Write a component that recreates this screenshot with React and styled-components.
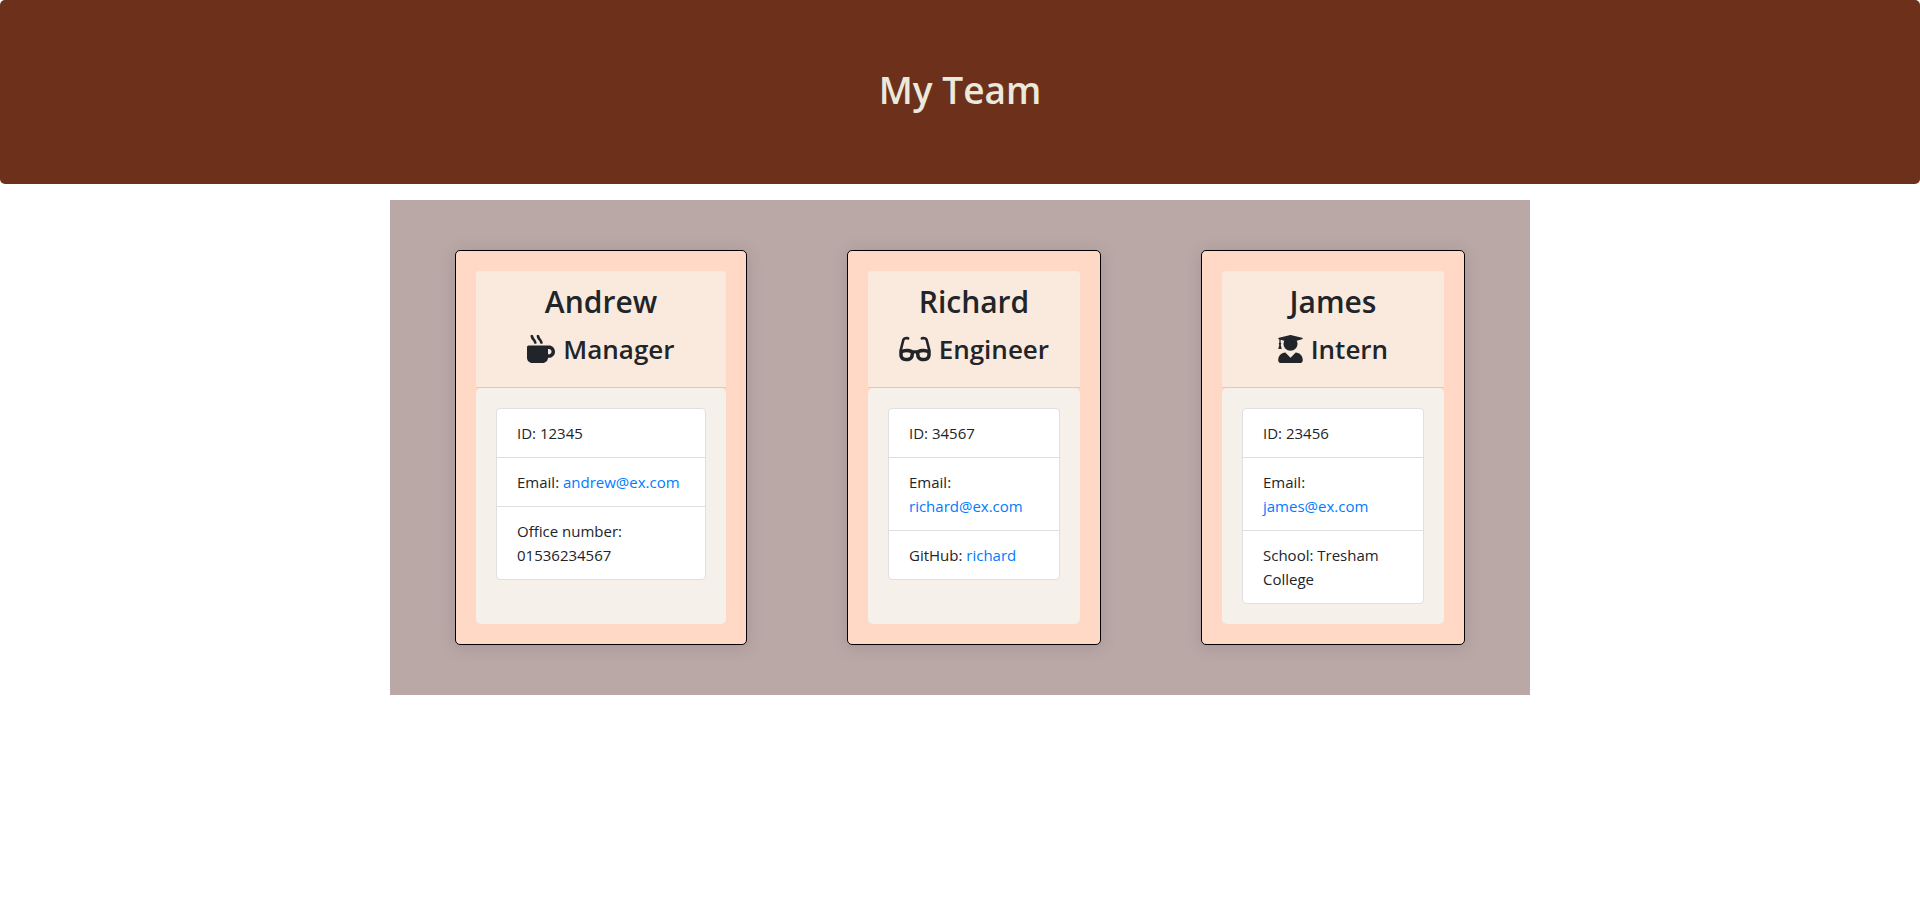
import React from "react";
import styled, { createGlobalStyle } from "styled-components";
import { FaMugHot, FaGlasses, FaUserGraduate } from "react-icons/fa";

const GlobalStyle = createGlobalStyle`
  *, *::before, *::after { box-sizing: border-box; }
  body {
    margin: 0;
    background: #ffffff;
    color: #212529;
    font-family: "Segoe UI", "Open Sans", "Noto Sans", sans-serif;
    font-size: 15px;
    line-height: 24px;
  }
`;

const Hero = styled.header`
  padding: 64px 32px;
  margin-bottom: 16px;
  border-radius: 5px;
  background: #6d301b;
  color: #ebe9dc;
  text-align: center;
`;

const Title = styled.h1`
  margin: 0 0 4px;
  font-size: 37px;
  font-weight: 600;
  line-height: 52px;
`;

const Team = styled.main`
  display: flex;
  flex-wrap: wrap;
  gap: 100px;
  max-width: 1140px;
  margin: 0 auto;
  padding: 50px 65px;
  background: #b9a8a5;
`;

const Card = styled.article`
  display: flex;
  flex-direction: column;
  flex: ${(p) => p.$share} 1 0;
  min-width: 240px;
  padding: 20px;
  border: 1px solid #000000;
  border-radius: 5px;
  background: #ffd8c6;
  box-shadow: 0 2px 16px rgba(100, 70, 110, 0.2);
`;

const CardHeader = styled.div`
  padding: 12px 20px;
  border-bottom: 1px solid rgba(0, 0, 0, 0.125);
  border-radius: 4px 4px 0 0;
  background: #faeadd;
  text-align: center;
`;

const Name = styled.h2`
  margin: 0 0 8px;
  font-size: 30px;
  font-weight: 600;
  line-height: 38px;
`;

const Role = styled.h3`
  margin: 0 0 6px;
  font-size: 26px;
  font-weight: 600;
  line-height: 40px;
  white-space: nowrap;

  svg {
    width: ${(p) => p.$iconWidth}px;
    height: 28px;
    margin-right: 1px;
    vertical-align: -4px;
  }
`;

const CardBody = styled.div`
  flex: 1;
  padding: 20px;
  border-radius: 5px;
  background: #f5f0e9;
`;

const Details = styled.ul`
  margin: 0;
  padding: 0;
  list-style: none;
  border: 1px solid #dfdfdf;
  border-radius: 4px;
  background: #ffffff;
`;

const Detail = styled.li`
  padding: 12px 20px;

  & + & {
    border-top: 1px solid #dfdfdf;
  }
`;

const Link = styled.a`
  color: #007bff;
  text-decoration: none;

  &:hover {
    text-decoration: underline;
  }
`;

const members = [
  {
    name: "Andrew", role: "Manager", Icon: FaMugHot, iconWidth: 28, share: 250,
    id: "12345", email: "andrew@ex.com", extra: "Office number: 01536234567",
  },
  {
    name: "Richard", role: "Engineer", Icon: FaGlasses, iconWidth: 32, share: 212,
    id: "34567", email: "richard@ex.com",
    extra: <>GitHub: <Link href="https://github.com/richard">richard</Link></>,
  },
  {
    name: "James", role: "Intern", Icon: FaUserGraduate, iconWidth: 25, share: 222,
    id: "23456", email: "james@ex.com", extra: "School: Tresham College",
  },
];

export default function App() {
  return (
    <>
      <GlobalStyle />
      <Hero>
        <Title>My Team</Title>
      </Hero>
      <Team>
        {members.map(({ name, role, Icon, iconWidth, share, id, email, extra }) => (
          <Card key={id} $share={share}>
            <CardHeader>
              <Name>{name}</Name>
              <Role $iconWidth={iconWidth}><Icon aria-hidden="true" /> {role}</Role>
            </CardHeader>
            <CardBody>
              <Details>
                <Detail>ID: {id}</Detail>
                <Detail>Email: <Link href={`mailto:${email}`}>{email}</Link></Detail>
                <Detail>{extra}</Detail>
              </Details>
            </CardBody>
          </Card>
        ))}
      </Team>
    </>
  );
}
